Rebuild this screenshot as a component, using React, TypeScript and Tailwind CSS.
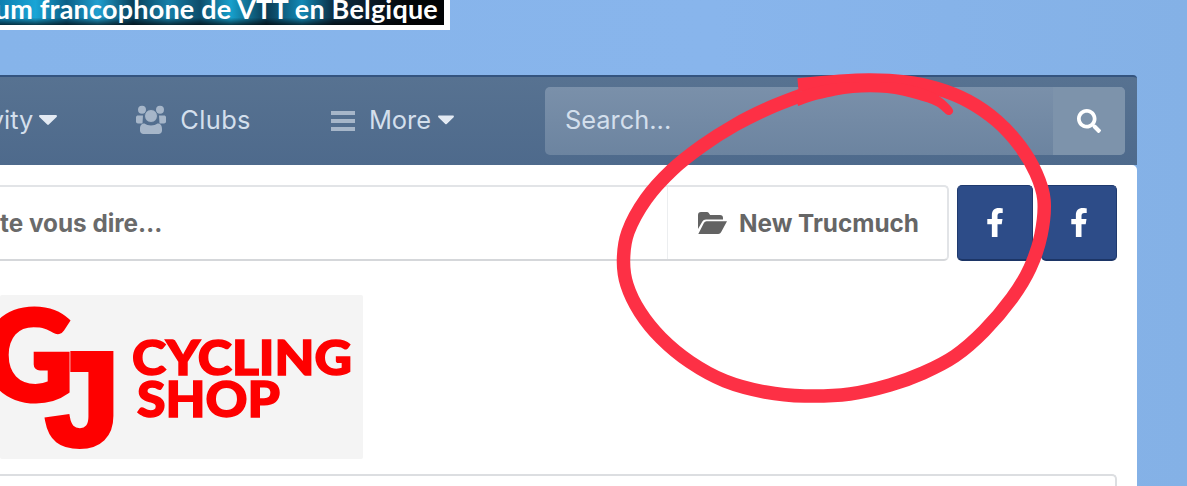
import { FaSearch, FaFacebookF } from "react-icons/fa";

const ring: [number, number][] = [[798,85],[837,81.500],[870,80],[905,82],[937,88.500],[968,101],[997,121],[1020,146],[1036,173],[1044,200],[1041,235],[1030,268],[1012,298],[984,331],[955,356],[923,373],[890,385],[850,394],[805,396],[765,392],[725,381],[690,362],[661,338],[640,312],[627,285],[623.500,260],[628,232],[646,199],[672,170],[702,146],[735,125],[769,108],[802,95]];
const tail: [number, number][] = [[795,93],[830,84],[870,82],[905,84],[929,91],[943,99],[953,110],[948,115],[936,106],[916,99],[887,93],[853,93],[820,99],[798,106]];

function smoothOpen(p: [number, number][]) {
  let d = `M${p[0][0]} ${p[0][1]}`;
  const n = p.length;
  for (let i = 0; i < n - 1; i++) {
    const a = p[Math.max(i - 1, 0)], b = p[i], c = p[i + 1], e = p[Math.min(i + 2, n - 1)];
    d += `C${b[0] + (c[0] - a[0]) / 6} ${b[1] + (c[1] - a[1]) / 6} ${c[0] - (e[0] - b[0]) / 6} ${c[1] - (e[1] - b[1]) / 6} ${c[0]} ${c[1]}`;
  }
  return d;
}

function Logo() {
  return (
    <svg width="363" height="164" viewBox="0 0 363 164" className="block">
      <rect width="363" height="164" rx="2" fill="#f4f4f4" />
      <g fill="#fe0000" stroke="#fe0000" fontFamily="Lato, 'Liberation Sans', sans-serif" fontWeight="900">
        <text x="-17" y="105" fontSize="124" strokeWidth="5">G</text>
        <text x="46" y="150" fontSize="132" strokeWidth="6" fontFamily="'Liberation Sans', sans-serif">J</text>
        <text x="132" y="80" fontSize="47" strokeWidth="1.5" textLength="220" lengthAdjust="spacingAndGlyphs">CYCLING</text>
        <text x="137" y="122" fontSize="49" strokeWidth="1.5" textLength="143" lengthAdjust="spacingAndGlyphs">SHOP</text>
      </g>
    </svg>
  );
}

function Caret({ className }: { className: string }) {
  return (
    <svg viewBox="0 0 18 10" className={className} fill="currentColor">
      <path d="M1.2 0H16.8C17.8 0 18.3 1.2 17.6 1.9L9.8 9.6C9.4 10 8.6 10 8.2 9.6L.4 1.9C-.3 1.2.2 0 1.2 0Z" />
    </svg>
  );
}

function Users() {
  return (
    <svg viewBox="0 0 32 29" className="ml-[78px] w-[32px] h-[29px] shrink-0" fill="#a6b6c9">
      <circle cx="7" cy="4.8" r="4" />
      <circle cx="25" cy="4.8" r="4" />
      <path d="M1 12.5C1 11 2 10.5 3 10.5H8L7.5 18.5H3C1.800 18.500 1 17.800 1 16.500ZM31 12.500C31 11 30 10.500 29 10.500H24L24.500 18.500H29C30.200 18.500 31 17.800 31 16.500Z" />
      <circle cx="16" cy="11" r="6.500" stroke="#54708f" strokeWidth="1" />
      <path d="M5 24C5 20 6.800 18.500 9.500 18.500C11 19.800 13.500 20.500 16 20.500C18.500 20.500 21 19.800 22.500 18.500C25.200 18.500 27 20 27 24V25.500C27 27.500 25.500 29 23.500 29H8.500C6.500 29 5 27.500 5 25.500Z" />
    </svg>
  );
}

function Bars() {
  return (
    <svg viewBox="0 0 24 20" className="ml-[80px] w-[24px] h-[20px] shrink-0 mt-[3px]" fill="#a6b6c9">
      <rect width="24" height="4" />
      <rect y="8" width="24" height="4" />
      <rect y="16" width="24" height="4" />
    </svg>
  );
}

function Folder() {
  return (
    <svg viewBox="0 0 29 22" className="w-[29px] h-[22px] mr-[12px] shrink-0" fill="#636363">
      <path d="M0 3A3 3 0 0 1 3 0H9A2 2 0 0 1 10.600.8L12.100 3H22A3 3 0 0 1 25 6V7.500H8A4.500 4.500 0 0 0 4.200 9.800L0 17Z" />
      <path d="M6 10.800A3 3 0 0 1 8.500 9.200H29L23.200 20A3.500 3.500 0 0 1 20.200 22H.3Z" />
    </svg>
  );
}

function Fb() {
  return (
    <div className="w-[76px] rounded-[5px] bg-[#2d4c88] border border-[#1f3a6e] border-b-2 border-b-[#1c3566] flex items-center justify-center">
      <FaFacebookF className="w-[18px] h-[29px] text-white" />
    </div>
  );
}

export default function App() {
  return (
    <div className="relative w-[1187px] h-[486px] overflow-hidden bg-[linear-gradient(90deg,#86b4ea_0%,#88b5ec_60%,#84b1e6_100%)] font-['Inter',sans-serif]">
      <div className="w-[450px] h-[30px] bg-white pr-[6px] pb-[5px]">
        <div className="h-full overflow-hidden flex justify-end bg-[linear-gradient(180deg,transparent_70%,rgba(0,0,0,0.65)_100%),linear-gradient(90deg,#0e7fb0_0%,#19a5d6_8%,#0c5f86_15%,#1f9fd0_22%,#0a3f58_30%,#167fa8_38%,#0d4d6b_45%,#16a0cc_52%,#0a3a52_60%,#1389b6_68%,#0c2f44_75%,#0a1a26_84%,#040608_92%,#020304_100%)]">
          <span className="whitespace-nowrap font-['Lato',sans-serif] font-bold text-[27px] leading-[26px] text-white pr-[6px] -mt-[4px] tracking-[0.2px]">
            um francophone de VTT en Belgique
          </span>
        </div>
      </div>

      <div className="mt-[45px] w-[1137px] h-[411px] flex flex-col">
        <div className="h-[90px] shrink-0 border-t-2 border-[#34547f] rounded-tr-[4px] bg-[linear-gradient(180deg,#577291_0%,#4e6a8c_100%)] flex items-center justify-end pr-[12px] overflow-hidden">
          <div className="flex items-center text-[25.4px] text-[#d3dfec] whitespace-nowrap mb-[2px]">
            <span>vity</span>
            <Caret className="ml-[6px] w-[18px] h-[10px] shrink-0 text-[#e3eaf3]" />
            <Users />
            <span className="ml-[13px] tracking-[0.4px]">Clubs</span>
            <Bars />
            <span className="ml-[14px]">More</span>
            <Caret className="ml-[7px] w-[16px] h-[10px] shrink-0 text-[#e3eaf3]" />
          </div>
          <div className="ml-[91px] w-[580px] h-[68px] shrink-0 rounded-[5px] bg-[linear-gradient(180deg,#7a90aa_0%,#6c84a0_100%)] flex items-stretch overflow-hidden">
            <div className="flex-1 flex items-center pl-[20px] pb-[2px] text-[25.4px] text-[#d3dfec]">Search...</div>
            <div className="w-[72px] bg-[#7d93ab] flex items-center justify-center">
              <FaSearch className="w-[24px] h-[24px] text-white" />
            </div>
          </div>
        </div>

        <div className="flex-1 bg-white rounded-tr-[5px] pt-[20px] pr-[20px] flex flex-col items-end">
          <div className="w-full flex items-stretch h-[76px] gap-[8px]">
            <div className="flex-1 flex border-2 border-l-0 border-[#e2e4e7] border-b-[#d5d7da] rounded-r-[5px]">
              <div className="flex-1 flex items-center text-[24.3px] font-bold text-[#6a6a6a] whitespace-nowrap">te vous dire…</div>
              <div className="w-[280px] border-l border-[#eceef0] flex items-center pl-[30px] text-[24.3px] font-bold text-[#666666] whitespace-nowrap">
                <Folder />
                New Trucmuch
              </div>
            </div>
            <Fb />
            <Fb />
          </div>
          <div className="w-full mt-[34px]">
            <Logo />
          </div>
          <div className="w-full mt-[15px] h-[20px] border-t-2 border-r-2 border-[#dcdee1] rounded-tr-[5px]" />
        </div>
      </div>

      <svg width="1187" height="486" viewBox="0 0 1187 486" className="absolute inset-0 pointer-events-none">
        <path d={smoothOpen(ring)} fill="none" stroke="#fd3045" strokeWidth="13.5" />
        <path d={smoothOpen(tail) + "Z"} fill="#fd3045" />
      </svg>
    </div>
  );
}
